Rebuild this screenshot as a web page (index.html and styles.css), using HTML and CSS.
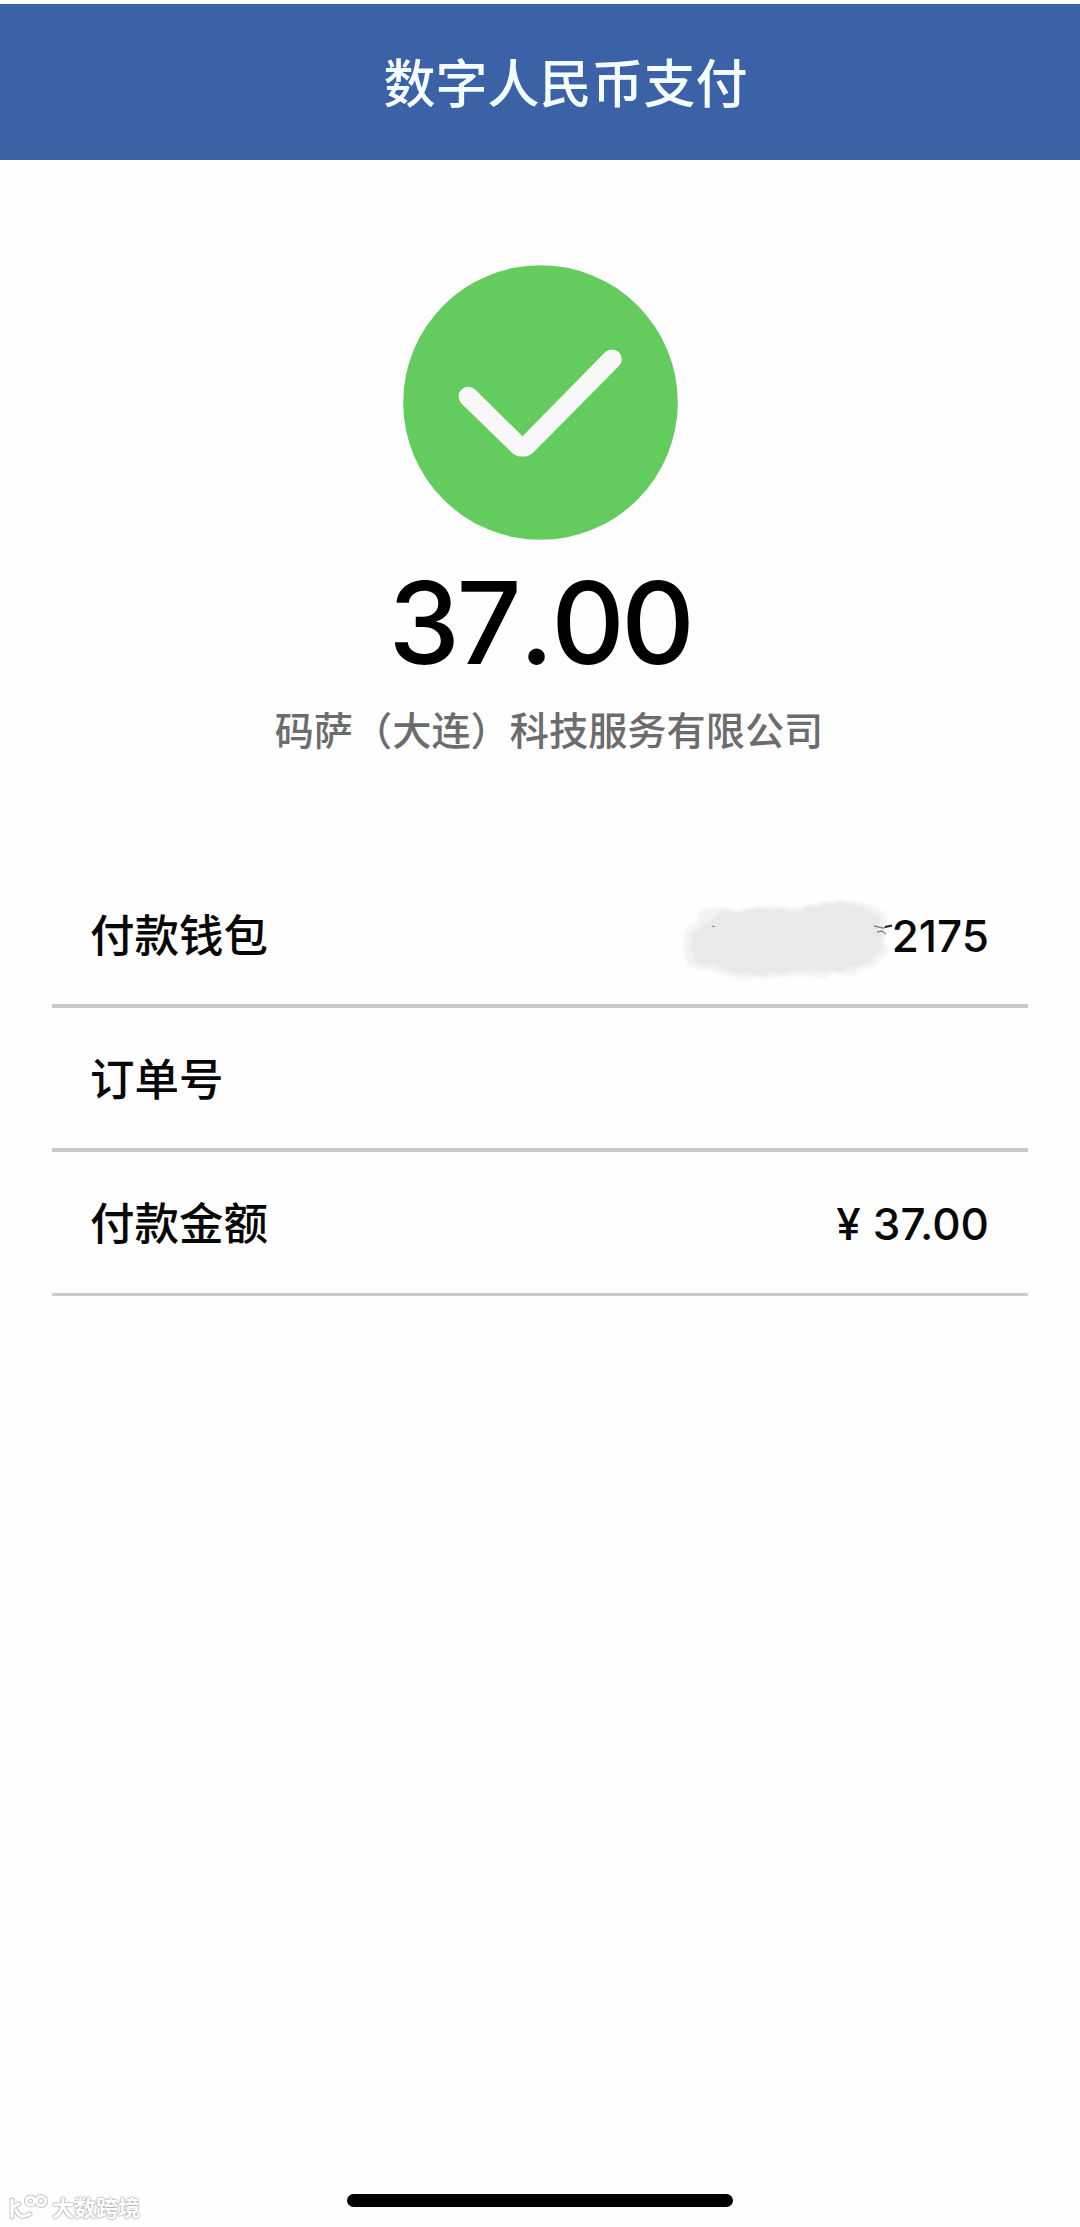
FILE: index.html
```html
<!DOCTYPE html>
<html lang="zh-CN">
<head>
<meta charset="utf-8">
<title>数字人民币支付</title>
<link rel="stylesheet" href="styles.css">
</head>
<body>
<div class="screen">
  <header class="header"><h1 class="title">数字人民币支付</h1></header>
  <main class="main">
    <section class="result">
      <svg class="success" viewBox="0 0 275 275" aria-hidden="true">
        <circle cx="137.5" cy="137.5" r="137.3" fill="#64cc5e"/>
        <path fill="#f7f8f7" d="M72.2 124.6 L119.5 171.2 L202.1 87.3 A9.7 9.7 0 0 1 215.9 101.1 L130.8 186.9 A16 16 0 0 1 108.2 186.9 L58.4 138.4 A9.7 9.7 0 0 1 72.2 124.6Z"/>
      </svg>
      <div class="amount">37<span class="point">.</span>00</div>
      <div class="merchant">码萨（大连）科技服务有限公司</div>
    </section>
    <dl class="details">
      <div class="row">
        <dt>付款钱包</dt>
        <dd class="wallet">
          <svg class="smudge" viewBox="0 0 216 84" aria-hidden="true">
            <path class="haze" fill="#f3f3f3" d="M18 10 L38 6 L58 10 L75 5 L124 6 L140 2 L170 0 L190 4 L207 14 L206 28 L203 40 L208 50 L194 66 L178 68 L174 74 L150 72 L145 77 L120 75 L102 76 L75 77 L60 78 L45 74 L30 69 L15 68 L6 64 L3 50 L4 32 L8 26 L14 24Z"/>
            <path class="smear" fill="#e9e9e9" d="M36 13 L44 8 L54 12 L67 9 L78 7 L90 10 L98 7 L112 11 L120 9 L127 4 L137 6 L144 1 L151 3 L161 0 L170 4 L181 5 L189 11 L196 13 L200 18 L197 26 L204 34 L199 41 L202 48 L194 55 L188 62 L180 64 L176 66 L168 66 L161 71 L151 69 L143 71 L132 69 L121 71 L111 70 L103 74 L93 71 L81 75 L67 72 L54 73 L45 69 L32 63 L23 65 L12 60 L14 54 L8 48 L11 41 L9 33 L17 29 L23 23 L30 19Z"/>
            <path fill="none" stroke="#888" stroke-width="1.3" d="M193 25 L202 27 L208 25 M196 31 L201 30 L205 33 M31 25 L34 26"/>
            <path fill="none" stroke="#222" stroke-width="1.8" d="M204 26 L211 24.5"/>
          </svg>
          <span>2175</span>
        </dd>
      </div>
      <div class="row"><dt>订单号</dt><dd></dd></div>
      <div class="row last"><dt>付款金额</dt><dd><span class="yen">¥</span><span>37.00</span></dd></div>
    </dl>
  </main>
  <div class="home-bar"></div>
  <div class="watermark">
    <svg class="mark" viewBox="0 0 40 26" aria-hidden="true">
      <g class="mark-edge"><path d="M3 6 V23 M3 16 Q5 11 10 10 M7 16 Q11 26 21 20"/><circle cx="21.5" cy="7" r="4"/><circle cx="32" cy="7" r="4.5"/></g>
      <g class="mark-line"><path d="M3 6 V23 M3 16 Q5 11 10 10 M7 16 Q11 26 21 20"/><circle cx="21.5" cy="7" r="4"/><circle cx="32" cy="7" r="4.5"/></g>
    </svg>
    <span>大数跨境</span>
  </div>
</div>
</body>
</html>
```
FILE: styles.css
```css
* { box-sizing: border-box; }
body { margin: 0; background: #fefefe; color: #080808; font-family: Inter, "Noto Sans CJK SC", sans-serif; }
.screen { position: relative; display: flex; flex-direction: column; height: 2227px; padding: 4px 0 20px; overflow: hidden; }
.header { display: flex; align-items: center; justify-content: center; height: 156px; padding: 5px 0 0 51px; background: #3b62a7; }
.title { margin: 0; color: #f5fcff; font-size: 52px; line-height: 60px; font-weight: 500; }
.main { flex: 1; }
.result { display: flex; flex-direction: column; align-items: center; padding-top: 105px; }
.success { width: 275px; height: 275px; }
.amount { margin-top: 23px; font-size: 114px; line-height: 120px; font-weight: 500; letter-spacing: -3.5px; color: #000; }
.point { margin: 0 1px 0 1px; }
.merchant { margin: 18px 0 0 18px; font-size: 39.2px; line-height: 60px; font-weight: 500; color: #6c6c6c; white-space: nowrap; }
.details { margin: 103px 52px 0; }
.row { display: flex; align-items: center; justify-content: space-between; height: 144px; padding: 3px 39px 0 38px; border-bottom: 4px solid #cacaca; font-size: 44.5px; line-height: 60px; font-weight: 500; }
.row.last { border-bottom-width: 3px; }
.row dd { display: flex; align-items: center; margin: 0; font-size: 44px; }
.smudge { width: 216px; height: 84px; margin: 14px -5px 0 0; overflow: visible; }
.haze { filter: blur(1.5px); }
.smear { filter: blur(1px); }
.yen { margin-right: 12px; }
.home-bar { align-self: center; width: 386px; height: 13px; border-radius: 7px; background: #000; }
.watermark { position: absolute; left: 9px; bottom: 4px; display: flex; align-items: center; gap: 3px; color: #fff; font-size: 22px; line-height: 30px; font-weight: 700; text-shadow: 0 0 2px #999, 0 0 2px #aaa; }
.mark { width: 40px; height: 26px; margin-bottom: 3px; overflow: visible; }
.mark-edge, .mark-line { fill: none; stroke-linecap: round; }
.mark-edge { stroke: #c6c6c6; stroke-width: 5; }
.mark-line { stroke: #fff; stroke-width: 3; }
```
